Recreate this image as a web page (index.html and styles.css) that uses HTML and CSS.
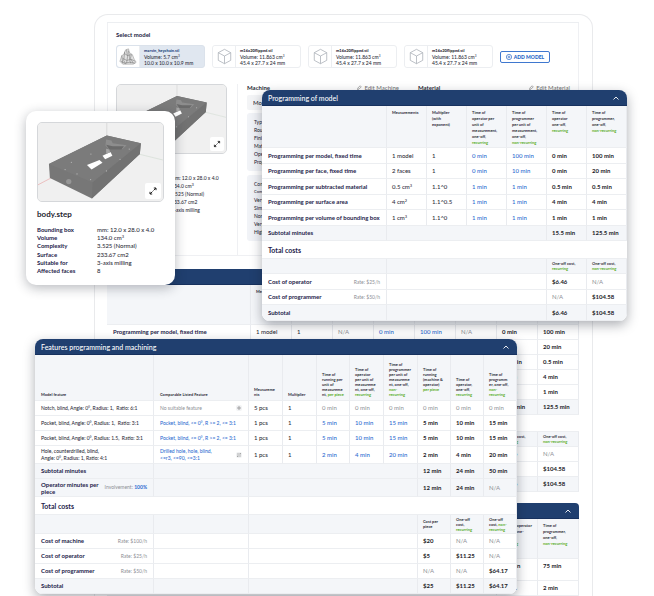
FILE: index.html
```html
<!DOCTYPE html>
<html lang="en">
<head>
<meta charset="utf-8">
<title>Model cost calculation</title>
<link rel="stylesheet" href="styles.css">
</head>
<body>
<svg class="defs" aria-hidden="true">
  <g id="part">
    <rect width="378" height="237" fill="#f0f0f0"/>
    <path d="M208 0V40" stroke="#cfcfcf" stroke-width="2"/>
    <path d="M305 94L378 112" stroke="#d3dcd3" stroke-width="2"/>
    <path d="M0 187L38 167" stroke="#e8a5a5" stroke-width="2"/>
    <path d="M208 38L311 61L308 94L163 228L36 166L33 124Z" fill="#777"/>
    <path d="M33 124L208 38L311 61L165 180Z" fill="#7b7b7b"/>
    <path d="M165 180L311 61L308 94L163 228Z" fill="#727272"/>
    <path d="M206 50l16 3 4 8 42 6-12 12-42 0-10-10z" fill="#8d8d8d"/>
    <path d="M206 66l20 4 34 0-8 10-36 0z" fill="#6a6a6a"/>
    <path d="M148 127L186 112L195 120L162 141Z" fill="#fff"/>
    <path d="M195 99L219 88L225 99L203 110Z" fill="#fff"/>
    <path d="M206 78l10 2 2 9-12 4z" fill="#a5a5a5"/>
    <circle cx="93" cy="177" r="8" fill="#969696"/>
    <g fill="#b4b4b4"><circle cx="82" cy="141" r="2"/><circle cx="118" cy="154" r="2"/><circle cx="159" cy="171" r="2"/><circle cx="207" cy="145" r="2"/><circle cx="248" cy="110" r="2"/><circle cx="276" cy="79" r="2"/><circle cx="160" cy="94" r="2"/><circle cx="101" cy="119" r="2"/></g>
  </g>
  <symbol id="expand" viewBox="0 0 16 16">
    <path d="M8.500 7.500L11 5M8.800 5H11v2.200M7.500 8.500L5 11M5 8.800V11h2.200" fill="none" stroke="#222" stroke-width="1"/>
  </symbol>
  <symbol id="cube" viewBox="0 0 24 24">
    <path d="M12 4.500L18.500 8v8L12 19.500 5.500 16V8zM5.500 8L12 11.500 18.500 8M12 11.500v8" fill="none" stroke="#a9aeb6" stroke-width=".8"/>
  </symbol>
  <symbol id="chevron" viewBox="0 0 8 8"><path d="M1.500 5.500L4 3l2.500 2.500" fill="none" stroke="#fff" stroke-width=".9"/></symbol>
  <symbol id="pencil" viewBox="0 0 8 8"><path d="M2 6l.5-2L5.500 1 7 2.500 4 5.500z" fill="none" stroke="#777" stroke-width=".8"/></symbol>
</svg>

<main class="scene">
  <section class="frame">
    <div class="workspace">
      <div class="picker">
        <h1>Select model</h1>
        <div class="models">
          <button class="model selected">
            <span class="thumb"><svg viewBox="0 0 24 24" width="23" height="23"><path d="M3 17l2-6 2-1 2-5 3-1 1 4 3 2 2 5 2 3-3 2H6z" fill="#e2e2e2" stroke="#888" stroke-width=".5"/><path d="M5 11l1 8M8 7l-1 9 2 4M10 5l1 7-1 7M12 6l1 7 1 6M15 10l-1 4 3 5M6 14l4 2 5-1 4 2M4 17l4 2 5-1 6 1M8 9l3 2 4-1" fill="none" stroke="#777" stroke-width=".6"/></svg></span>
            <span class="meta"><b>marvin_keychain.stl</b><span>Volume: 5.7 cm<sup>3</sup></span><span>10.0 x 10.0 x 10.9 mm</span></span>
          </button>
          <button class="model">
            <span class="thumb"><svg width="23" height="23"><use href="#cube"/></svg></span>
            <span class="meta"><b>m16x20flipped.stl</b><span>Volume: 11.863 cm<sup>3</sup></span><span>45.4 x 27.7 x 24 mm</span></span>
          </button>
          <button class="model">
            <span class="thumb"><svg width="23" height="23"><use href="#cube"/></svg></span>
            <span class="meta"><b>m16x20flipped.stl</b><span>Volume: 11.863 cm<sup>3</sup></span><span>45.4 x 27.7 x 24 mm</span></span>
          </button>
          <button class="model">
            <span class="thumb"><svg width="23" height="23"><use href="#cube"/></svg></span>
            <span class="meta"><b>m16x20flipped.stl</b><span>Volume: 11.863 cm<sup>3</sup></span><span>45.4 x 27.7 x 24 mm</span></span>
          </button>
          <button class="add"><svg viewBox="0 0 8 8" width="6" height="6"><path d="M4 .5a3.500 3.500 0 100 7 3.500 3.500 0 000-7zM4 2.200v3.600M2.200 4h3.600" fill="none" stroke="#2565c7" stroke-width=".9"/></svg>ADD MODEL</button>
        </div>
      </div>

      <div class="detail">
        <div class="summary">
          <div class="preview"><svg class="shape" viewBox="0 0 378 237"><use href="#part"/></svg><button class="zoom" aria-label="Expand preview"><svg width="14" height="14"><use href="#expand"/></svg></button></div>
          <h2>body.step</h2>
          <dl class="facts small">
            <dt>Bounding box</dt><dd>mm: 12.0 x 28.0 x 4.0</dd>
            <dt>Volume</dt><dd>134.0 cm<sup>3</sup></dd>
            <dt>Complexity</dt><dd>3.525 (Normal)</dd>
            <dt>Surface</dt><dd>233.67 cm2</dd>
            <dt>Suitable for</dt><dd>3-axis milling</dd>
          </dl>
        </div>
        <div class="setup">
          <header><h3>Machine</h3><button class="edit"><svg width="6" height="6"><use href="#pencil"/></svg>Edit Machine</button></header>
          <select aria-label="Machine model"><option>Model</option></select>
          <ul class="props"><li>Type</li><li>Roughing</li><li>Finishing</li><li>Material</li><li>Operator</li><li>Programmer</li></ul>
          <ul class="props costs"><li>Complexity</li><li class="tiny">Complexity</li><li>Very low</li><li>Simple</li><li>Normal</li><li>Very high</li><li>High</li></ul>
        </div>
        <div class="setup">
          <header><h3>Material</h3><button class="edit"><svg width="6" height="6"><use href="#pencil"/></svg>Edit Material</button></header>
        </div>
      </div>

      <section class="block">
        <header class="bar"></header>
        <table class="back">
          <colgroup><col><col class="n"><col class="n"><col class="n"><col class="n"><col class="n"><col class="n"><col class="n"><col class="n"></colgroup>
          <thead><tr><th></th><th>Measurements</th><th></th><th></th><th></th><th></th><th></th><th></th><th></th></tr></thead>
          <tbody>
            <tr><th>Programming per model, fixed time</th><td>1 model</td><td>1</td><td class="na">N/A</td><td class="in">0 min</td><td class="in">100 min</td><td class="na">N/A</td><td class="sum">0 min</td><td class="sum">100 min</td></tr>
            <tr><th></th><td></td><td></td><td></td><td></td><td></td><td></td><td class="sum">0 min</td><td class="sum">20 min</td></tr>
            <tr><th></th><td></td><td></td><td></td><td></td><td></td><td></td><td class="sum">0.5 min</td><td class="sum">0.5 min</td></tr>
            <tr><th></th><td></td><td></td><td></td><td></td><td></td><td></td><td class="sum">4 min</td><td class="sum">4 min</td></tr>
            <tr><th></th><td></td><td></td><td></td><td></td><td></td><td></td><td class="sum">1 min</td><td class="sum">1 min</td></tr>
            <tr class="tint"><th></th><td></td><td></td><td></td><td></td><td></td><td></td><td class="sum">15.5 min</td><td class="sum">125.5 min</td></tr>
            <tr class="total"><th colspan="9"></th></tr>
            <tr class="tint sub"><th colspan="7"></th><td>One-off cost,<br><i>recurring</i></td><td>One-off cost,<br><i>non-recurring</i></td></tr>
            <tr><th colspan="7"></th><td class="sum">$6.46</td><td class="na">N/A</td></tr>
            <tr><th colspan="7"></th><td class="na">N/A</td><td class="sum">$104.58</td></tr>
            <tr class="tint"><th colspan="7"></th><td class="sum">$6.46</td><td class="sum">$104.58</td></tr>
          </tbody>
        </table>
      </section>

      <section class="block">
        <header class="bar"><button aria-label="Collapse section"><svg width="8" height="8"><use href="#chevron"/></svg></button></header>
        <table class="back">
          <colgroup><col><col class="n"><col class="n"></colgroup>
          <thead><tr><th></th><th>Time of operator<br>per lot, one-<br>off,<br><i>recurring</i></th><th>Time of<br>programmer,<br>one-off,<br><i>non-recurring</i></th></tr></thead>
          <tbody>
            <tr class="tall"><th></th><td class="sum">15 min</td><td class="sum">75 min</td></tr>
            <tr><th></th><td class="sum">1 min</td><td class="sum">2 min</td></tr>
          </tbody>
        </table>
      </section>
    </div>
  </section>

  <article class="card">
    <div class="preview"><svg class="shape" viewBox="0 0 378 237"><use href="#part"/></svg><button class="zoom" aria-label="Expand preview"><svg width="16" height="16"><use href="#expand"/></svg></button></div>
    <h2>body.step</h2>
    <dl class="facts">
      <dt>Bounding box</dt><dd>mm: 12.0 x 28.0 x 4.0</dd>
      <dt>Volume</dt><dd>134.0 cm<sup>3</sup></dd>
      <dt>Complexity</dt><dd>3.525 (Normal)</dd>
      <dt>Surface</dt><dd>233.67 cm2</dd>
      <dt>Suitable for</dt><dd>3-axis milling</dd>
      <dt>Affected faces</dt><dd>8</dd>
    </dl>
  </article>

  <section class="panel programming">
    <header class="bar"><h2>Programming of model</h2><button aria-label="Collapse programming of model"><svg width="8" height="8"><use href="#chevron"/></svg></button></header>
    <table>
      <colgroup><col><col class="n"><col class="n"><col class="n"><col class="n"><col class="n"><col class="n"></colgroup>
      <thead><tr><th></th><th>Measurements</th><th>Multiplier<br>(with<br>exponent)</th><th>Time of<br>operator per<br>unit of<br>measurement,<br>one-off,<br><i>recurring</i></th><th>Time of<br>programmer<br>per unit of<br>measurement,<br>one-off,<br><i>non-recurring</i></th><th>Time of<br>operator<br>one-off,<br><i>recurring</i></th><th>Time of<br>programmer,<br>one-off,<br><i>non-recurring</i></th></tr></thead>
      <tbody>
        <tr><th>Programming per model, fixed time</th><td>1 model</td><td>1</td><td class="in">0 min</td><td class="in">100 min</td><td class="sum">0 min</td><td class="sum">100 min</td></tr>
        <tr><th>Programming per face, fixed time</th><td>2 faces</td><td>1</td><td class="in">0 min</td><td class="in">10 min</td><td class="sum">0 min</td><td class="sum">20 min</td></tr>
        <tr><th>Programming per subtracted material</th><td>0.5 cm<sup>3</sup></td><td>1.1^0</td><td class="in">1 min</td><td class="in">1 min</td><td class="sum">0.5 min</td><td class="sum">0.5 min</td></tr>
        <tr><th>Programming per surface area</th><td>4 cm<sup>2</sup></td><td>1.1^0.5</td><td class="in">1 min</td><td class="in">1 min</td><td class="sum">4 min</td><td class="sum">4 min</td></tr>
        <tr><th>Programming per volume of bounding box</th><td>1 cm<sup>3</sup></td><td>1.1^0</td><td class="in">1 min</td><td class="in">1 min</td><td class="sum">1 min</td><td class="sum">1 min</td></tr>
        <tr class="tint"><th>Subtotal minutes</th><td colspan="4"></td><td class="sum">15.5 min</td><td class="sum">125.5 min</td></tr>
        <tr class="total"><th colspan="7">Total costs</th></tr>
        <tr class="tint sub"><th></th><td colspan="4"></td><td>One-off cost,<br><i>recurring</i></td><td>One-off cost,<br><i>non-recurring</i></td></tr>
        <tr><th><span class="split">Cost of operator <small>Rate: $25/h</small></span></th><td colspan="4"></td><td class="sum">$6.46</td><td class="na">N/A</td></tr>
        <tr><th><span class="split">Cost of programmer <small>Rate: $50/h</small></span></th><td colspan="4"></td><td class="na">N/A</td><td class="sum">$104.58</td></tr>
        <tr class="tint"><th>Subtotal</th><td colspan="4"></td><td class="sum">$6.46</td><td class="sum">$104.58</td></tr>
      </tbody>
    </table>
  </section>

  <section class="panel features">
    <header class="bar"><h2>Features programming and machining</h2><button aria-label="Collapse features"><svg width="8" height="8"><use href="#chevron"/></svg></button></header>
    <table>
      <colgroup><col><col class="listed"><col class="w"><col class="w"><col class="n"><col class="w"><col class="w"><col class="n"><col class="n"><col class="n"></colgroup>
      <thead><tr><th>Model feature</th><th>Comparable Listed Feature</th><th>Measureme<br>nts</th><th>Multiplier</th><th>Time of<br>running per<br>unit of<br>measureme<br>nt, <i>per piece</i></th><th>Time of<br>operator<br>per unit of<br>measureme<br>nt, one-off,<br><i>recurring</i></th><th>Time of<br>programmer<br>per unit of<br>measureme<br>nt, one-off,<br><i>non-<br>recurring</i></th><th class="lift">Time of<br>running<br>(machine &amp;<br>operator)<br><i>per piece</i></th><th>Time of<br>operator,<br>one-off,<br><i>recurring</i></th><th>Time of<br>programm<br>er, one-off,<br><i>non-<br>recurring</i></th></tr></thead>
      <tbody>
        <tr><td>Notch, blind, Angle: 0°, Radius: 1,&nbsp; Ratio: 6:1</td><td class="na"><span class="split">No suitable feature <button class="mini" aria-label="Add feature"><svg viewBox="0 0 6 6" width="6" height="6"><path d="M3 1v4M1 3h4" stroke="#888" stroke-width=".7"/></svg></button></span></td><td>5 pcs</td><td>1</td><td class="na">0 min</td><td class="na">0 min</td><td class="na">0 min</td><td class="na">0 min</td><td class="na">0 min</td><td class="na">0 min</td></tr>
        <tr><td>Pocket, blind, Angle: 0°, Radius: 1,&nbsp; Ratio: 3:1</td><td><a href="#">Pocket, blind, &lt;= 0°, R &gt;= 2, &lt;= 3:1</a></td><td>1 pcs</td><td>1</td><td class="in">5 min</td><td class="in">10 min</td><td class="in">15 min</td><td class="sum">5 min</td><td class="sum">10 min</td><td class="sum">15 min</td></tr>
        <tr><td>Pocket, blind, Angle: 0°, Radius: 1.5,&nbsp; Ratio: 3:1</td><td><a href="#">Pocket, blind, &lt;= 0°, R &gt;= 2, &lt;= 3:1</a></td><td>1 pcs</td><td>1</td><td class="in">5 min</td><td class="in">10 min</td><td class="in">15 min</td><td class="sum">5 min</td><td class="sum">10 min</td><td class="sum">15 min</td></tr>
        <tr class="double"><td>Hole, counterdrilled, blind,<br>Angle: 0°, Radius: 1, Ratio: 4:1</td><td><span class="split"><a href="#">Drilled hole, hole, blind,<br>&lt;=r3, &lt;=90, &lt;=3:1</a> <button class="mini" aria-label="Swap feature"><svg viewBox="0 0 6 6" width="6" height="6"><path d="M1 2h4L4 1M5 4H1l1 1" fill="none" stroke="#888" stroke-width=".6"/></svg></button></span></td><td>1 pcs</td><td>1</td><td class="in">2 min</td><td class="in">4 min</td><td class="in">20 min</td><td class="sum">2 min</td><td class="sum">4 min</td><td class="sum">20 min</td></tr>
        <tr class="tint"><th>Subtotal minutes</th><td></td><td colspan="5"></td><td class="sum">12 min</td><td class="sum">24 min</td><td class="sum">50 min</td></tr>
        <tr class="tint double"><th><span class="split"><span>Operator minutes per<br>piece</span> <small>Involvement: <b>100%</b></small></span></th><td></td><td colspan="5"></td><td class="sum">12 min</td><td class="sum">24 min</td><td class="na">N/A</td></tr>
        <tr class="total"><th>Total costs</th><td></td><td colspan="8"></td></tr>
        <tr class="tint sub"><th></th><td></td><td colspan="5"></td><td>Cost per<br>piece</td><td>One-off<br>cost,<br><i>recurring</i></td><td>One-off<br>cost, <i>non-<br>recurring</i></td></tr>
        <tr><th><span class="split">Cost of machine <small>Rate: $100/h</small></span></th><td></td><td colspan="5"></td><td class="sum">$20</td><td class="na">N/A</td><td class="na">N/A</td></tr>
        <tr><th><span class="split">Cost of operator <small>Rate: $25/h</small></span></th><td></td><td colspan="5"></td><td class="sum">$5</td><td class="sum">$11.25</td><td class="na">N/A</td></tr>
        <tr><th><span class="split">Cost of programmer <small>Rate: $50/h</small></span></th><td></td><td colspan="5"></td><td class="na">N/A</td><td class="na">N/A</td><td class="sum">$64.17</td></tr>
        <tr class="tint"><th>Subtotal</th><td></td><td colspan="5"></td><td class="sum">$25</td><td class="sum">$11.25</td><td class="sum">$64.17</td></tr>
      </tbody>
    </table>
  </section>
</main>
</body>
</html>
```
FILE: styles.css
```css
* { box-sizing: border-box; }
body { margin: 0; background: #fff; color: #2c2c38; font: 500 6px/8px Lato, "Liberation Sans", sans-serif; }
h1, h2, h3, dl, dd, ul { margin: 0; padding: 0; }
ul { list-style: none; }
button, select { font: inherit; color: inherit; margin: 0; padding: 0; border: 0; background: none; text-align: left; }
svg { display: block; flex: none; }
sup { font-size: 4px; line-height: 0; vertical-align: 2px; }
a { color: #2c6bd0; text-decoration: none; }
.defs { position: absolute; width: 0; height: 0; }

.scene { position: relative; height: 100vh; overflow: hidden; }

/* Main window */
.frame { margin: 14px 61px 0 94px; padding: 7px 13px 0 12px; border: 1px solid #e9eaec; border-bottom: 0; border-radius: 14px 14px 0 0; }
.workspace { border-top: 1px solid #eceef1; }
.picker { padding: 8px 8px 0; border-left: 1px solid #eff0f3; border-right: 1px solid #eff0f3; }
.picker h1 { font-size: 6px; line-height: 8px; font-weight: 700; color: #23233f; }
.models { display: flex; align-items: center; gap: 7px; margin-top: 6px; }
.model { display: flex; width: 89px; height: 23px; border: 1px solid #eceef1; border-radius: 3px; }
.model.selected { background: #e0e7f0; border-color: #dbe2eb; }
.thumb { display: flex; align-items: center; width: 23px; background: #fff; border-right: 1px solid #eceef1; border-radius: 3px 0 0 3px; }
.meta { display: flex; flex-direction: column; padding: 2px 0 0 4px; font-size: 5px; line-height: 6px; white-space: nowrap; }
.meta b { font-size: 4px; font-weight: 900; }
.selected b { color: #24447c; }
.meta sup { font-size: 3px; }
.add { display: flex; align-items: center; justify-content: center; gap: 2px; width: 50px; height: 12px; border: 1px solid #3f78cf; border-radius: 2px; color: #2565c7; font-size: 5px; font-weight: 900; }

.detail { display: flex; padding: 16px 8px 0; height: 188px; border: 1px solid #eff0f3; border-top: 0; }
.summary { width: 122px; padding-right: 10px; border-right: 1px solid #eff0f3; }
.summary h2 { margin-top: 9px; font-size: 7px; }
.setup { flex: 1; padding-left: 9px; }
.setup:last-child { flex: 0 0 161px; }
.setup header { display: flex; justify-content: space-between; padding-right: 10px; }
.setup:last-child header { padding-right: 0; }
.setup h3 { font-size: 6px; font-weight: 700; }
.edit { display: flex; align-items: center; gap: 2px; color: #777; }
.setup select { display: block; appearance: none; width: 100%; height: 15px; margin: 3px 0; padding-left: 6px; background: #f3f4f6; border-radius: 2px; }
.props { padding: 5px 7px; background: #f1f3f7; border-radius: 3px; font-size: 5px; }
.props.costs { margin-top: 4px; }
.props .tiny { font-size: 4px; }

.block { margin-bottom: 11px; }
.block:nth-of-type(1) { margin-top: 13px; }

/* Model preview */
.preview { position: relative; overflow: hidden; border: 1px solid #d5d7da; border-radius: 5px; background: #f0f0f0; }
.shape { width: 100%; height: auto; }
.zoom { position: absolute; right: 2px; bottom: 2px; background: #fff; border-radius: 2px; }
.facts { display: grid; grid-template-columns: 60px 1fr; grid-template-rows: repeat(6, 1fr); height: 50px; align-items: center; white-space: nowrap; }
.facts dt { font-weight: 700; color: #25234a; }
.facts.small { grid-template-columns: 55px 1fr; grid-template-rows: repeat(5, 1fr); height: 37px; margin-top: 3px; font-size: 5px; }
.card { position: absolute; left: 26px; top: 111px; width: 149px; padding: 11px 11px 10px; background: #fff; border-radius: 10px; box-shadow: 0 3px 12px rgba(20, 25, 40, .3); }
.card h2 { margin: 7px 0 6px; font-size: 8px; line-height: 10px; color: #25252f; }

/* Cost tables */
.bar { display: flex; align-items: center; justify-content: space-between; height: 16px; padding: 0 7px 0 6px; background: #203f6f; color: #fff; border-bottom: 1px solid #17315e; }
.block .bar { border-radius: 0 4px 0 0; justify-content: flex-end; }
.bar h2 { font-size: 7px; font-weight: 500; }
table { width: 100%; table-layout: fixed; border-collapse: separate; border-spacing: 0; background: #fff; }
th, td { padding: 0 0 0 5px; border-bottom: 1px solid #eceef1; border-right: 1px solid #e9ebef; text-align: left; white-space: nowrap; font-weight: 500; }
tbody th { padding-left: 6px; font-weight: 700; color: #25234a; }
thead th { height: 42px; padding-top: 4px; background: #f4f6f9; font-size: 4px; line-height: 6px; font-weight: 700; vertical-align: top; }
tbody tr { height: 15px; }
i { font-style: normal; color: #58ad26; }
.in { color: #2c6bd0; }
.na, small { color: #8d8f95; font-weight: 400; }
.sum { font-weight: 700; color: #1c1c28; }
.tint > * { background: #f4f6f9; }
.total th { font-size: 7px; border-right: 0; }
.sub td { font-size: 4px; line-height: 5px; font-weight: 700; }
small { font-size: 5px; }
small b { color: #2c6bd0; font-weight: 700; }
.split { display: flex; align-items: center; justify-content: space-between; padding-right: 6px; }

.back .n { width: 41px; }
.back thead th { height: 40px; }
.back .total { height: 17px; }
.back .tall { height: 22px; vertical-align: top; }
.back .tall td { padding-top: 3px; }

.panel { position: absolute; overflow: hidden; background: #fff; border-radius: 8px; box-shadow: 0 4px 12px rgba(20, 25, 40, .35); }
.programming { left: 262px; right: 27px; top: 90px; }
.programming .n { width: 40px; }
.programming tbody tr:nth-child(odd) { height: 16px; }
.programming tbody .total.total { height: 18px; }
.features { left: 35px; right: 137px; top: 339px; }
.features .n { width: 33px; }
.features .w { width: 34px; }
.features .listed { width: 95px; }
.features thead th { height: 46px; padding-top: 0; padding-bottom: 3px; line-height: 5px; vertical-align: bottom; }
.features thead .lift { padding-bottom: 8px; }
.features td:first-child, .features th:first-child { padding-left: 6px; }
.features td:nth-child(2), .features th:nth-child(2) { padding-left: 6px; }
.features td:first-child, .features td:nth-child(2) { font-size: 5px; }
.features .double { height: 18px; line-height: 7px; }
.features .total { height: 18px; }
.features .sub { height: 19px; }
.mini { background: #f1f2f4; border-radius: 2px; }
```
